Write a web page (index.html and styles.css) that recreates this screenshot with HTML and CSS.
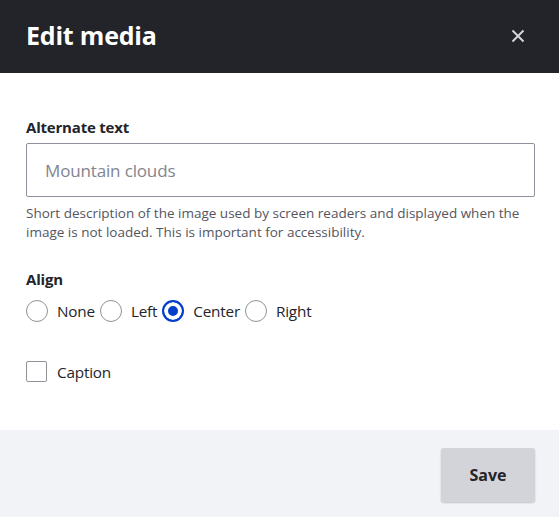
FILE: index.html
```html
<!DOCTYPE html>
<html lang="en">
<head>
<meta charset="utf-8">
<title>Edit media</title>
<link rel="stylesheet" href="styles.css">
</head>
<body>
<div class="dialog">
  <header class="dialog-header">
    <h1 class="dialog-title">Edit media</h1>
    <button class="close" type="button" aria-label="Close">
      <svg width="14" height="14" viewBox="0 0 14 14" aria-hidden="true"><path d="M1.5 1.5 L12.5 12.5 M12.5 1.5 L1.5 12.5" stroke="#d3d4d9" stroke-width="2" fill="none"/></svg>
    </button>
  </header>
  <main class="dialog-body">
    <div class="field">
      <label class="field-label" for="alt">Alternate text</label>
      <input class="text-input" id="alt" type="text" placeholder="Mountain clouds">
      <p class="description">Short description of the image used by screen readers and displayed when the image is not loaded. This is important for accessibility.</p>
    </div>
    <fieldset class="align">
      <legend class="field-label">Align</legend>
      <div class="radios">
        <label class="radio"><span class="radio-dot"></span><span>None</span></label>
        <label class="radio"><span class="radio-dot"></span><span>Left</span></label>
        <label class="radio"><span class="radio-dot checked"></span><span>Center</span></label>
        <label class="radio"><span class="radio-dot"></span><span>Right</span></label>
      </div>
    </fieldset>
    <label class="checkbox"><span class="box"></span><span>Caption</span></label>
  </main>
  <footer class="dialog-footer">
    <button class="save" type="button">Save</button>
  </footer>
</div>
</body>
</html>
```

FILE: styles.css
```css
* { box-sizing: border-box; }
html, body { margin: 0; padding: 0; }
body {
  font-family: "Open Sans", "Noto Sans", sans-serif;
  color: #232429;
  background: #fff;
}
.dialog {
  width: 559px;
  height: 517px;
  display: flex;
  flex-direction: column;
}
.dialog-header {
  height: 73px;
  background: #232429;
  display: flex;
  align-items: center;
  justify-content: space-between;
  padding: 0 30px 2px 26px;
}
.dialog-title {
  margin: 0;
  color: #fff;
  font-size: 25px;
  font-weight: 700;
  line-height: 1;
  letter-spacing: -0.2px;
}
.close {
  background: none;
  border: 0;
  padding: 0;
  width: 22px;
  height: 22px;
  display: flex;
  align-items: center;
  justify-content: center;
}
.dialog-body {
  flex: 1;
  padding: 45px 24px 0 26px;
}
.field-label {
  display: block;
  font-size: 15px;
  font-weight: 700;
  line-height: 18px;
  padding: 0;
  letter-spacing: -0.2px;
}
.field .field-label { margin-bottom: 7px; }
.text-input {
  display: block;
  width: 100%;
  height: 54px;
  border: 1px solid #8e929c;
  border-radius: 2px;
  padding: 0 18px;
  font-family: inherit;
  font-size: 17px;
  color: #232429;
  letter-spacing: -0.15px;
}
.text-input::placeholder { color: #82858f; }
.description {
  margin: 7px 0 0;
  font-size: 13.5px;
  line-height: 19px;
  color: #545560;
  letter-spacing: 0;
}
.align {
  border: 0;
  margin: 28px 0 0;
  padding: 0;
}
.align .field-label { margin-bottom: 12px; }
.radios {
  display: flex;
  align-items: center;
}
.radio {
  display: flex;
  align-items: center;
  font-size: 15.3px;
  letter-spacing: -0.2px;
}
.radio-dot {
  width: 22px;
  height: 22px;
  border: 1px solid #919297;
  border-radius: 50%;
  margin-right: 9px;
  flex: none;
}
.radio-dot.checked {
  border: 2px solid #003ecc;
  background: #003ecc;
  box-shadow: inset 0 0 0 4px #fff;
}
.radio + .radio { margin-left: 5px; }
.checkbox {
  display: flex;
  align-items: center;
  margin-top: 39px;
  font-size: 15.3px;
  letter-spacing: -0.2px;
}
.box {
  width: 21px;
  height: 21px;
  border: 1px solid #919297;
  border-radius: 2px;
  margin-right: 10px;
}
.dialog-footer {
  height: 87px;
  background: #f2f3f7;
  display: flex;
  justify-content: flex-end;
  align-items: flex-start;
  padding: 18px 24px 0 0;
}
.save {
  width: 94px;
  height: 54px;
  background: #d3d4d9;
  border: 0;
  border-radius: 3px;
  box-shadow: 0 1px 2px rgba(0,0,0,0.2);
  font-family: inherit;
  font-size: 16px;
  font-weight: 700;
  color: #232429;
}
```
